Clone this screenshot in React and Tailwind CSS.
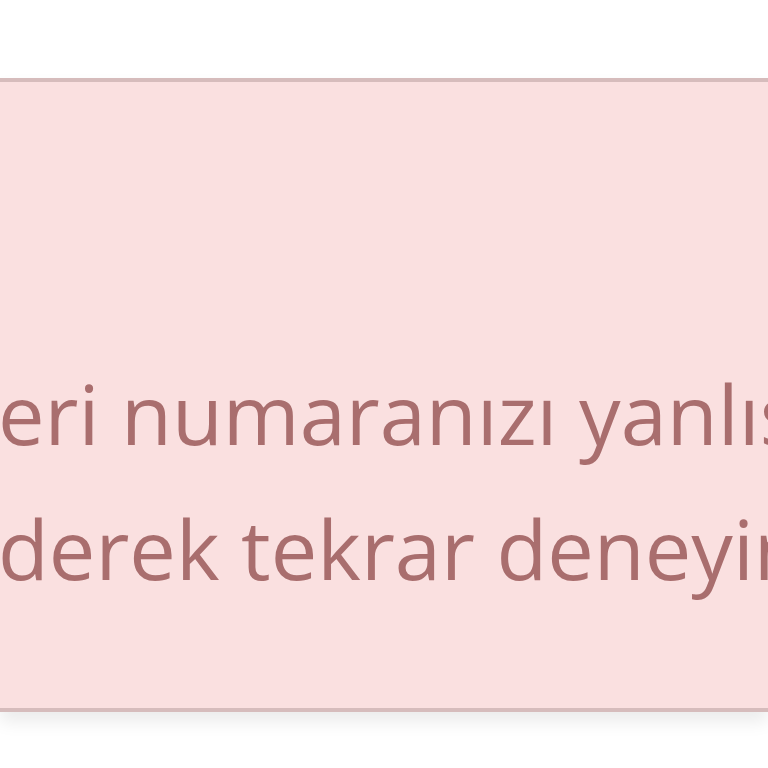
export default function App() {
  return (
    <div className="h-[768px] w-[768px] overflow-hidden bg-white" style={{ fontFamily: '"Open Sans", sans-serif' }}>
      <div className="h-[78px]" />
      <div className="border-y-4 border-[#d6bcbc] bg-[#fae0e0] shadow-[0_10px_16px_rgba(0,0,0,0.08)]">
        <div className="h-[626px] overflow-hidden pt-[263px] text-[83px] leading-[135px] text-[#a96e6e] whitespace-nowrap">
          <div className="-ml-[2px]">eri numaranızı yanlış</div>
          <div className="-ml-[2px]">derek tekrar deneyin.</div>
        </div>
      </div>
    </div>
  );
}
